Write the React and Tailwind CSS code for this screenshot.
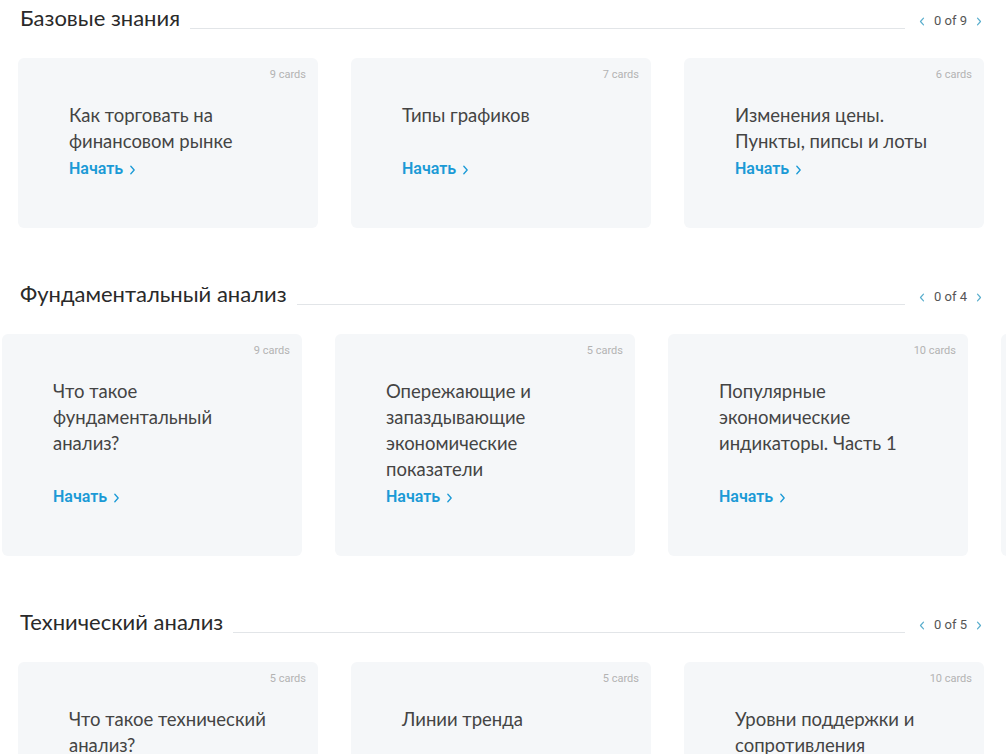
import React from "react";

const sections = [
  {
    title: "Базовые знания",
    pager: "0 of 9",
    offset: "ml-[18px]",
    titleHeight: "min-h-[52px]",
    peek: false,
    cards: [
      { count: "9 cards", text: "Как торговать на финансовом рынке" },
      { count: "7 cards", text: "Типы графиков" },
      { count: "6 cards", text: "Изменения цены. Пункты, пипсы и лоты" },
    ],
  },
  {
    title: "Фундаментальный анализ",
    pager: "0 of 4",
    offset: "ml-[2px]",
    titleHeight: "min-h-[104px]",
    peek: true,
    cards: [
      { count: "9 cards", text: "Что такое фундаментальный анализ?" },
      { count: "5 cards", text: "Опережающие и запаздывающие экономические показатели" },
      { count: "10 cards", text: "Популярные экономические индикаторы. Часть 1" },
    ],
  },
  {
    title: "Технический анализ",
    pager: "0 of 5",
    offset: "ml-[18px]",
    titleHeight: "min-h-[52px]",
    peek: false,
    cards: [
      { count: "5 cards", text: "Что такое технический анализ?" },
      { count: "5 cards", text: "Линии тренда" },
      { count: "10 cards", text: "Уровни поддержки и сопротивления" },
    ],
  },
];

const Chevron = ({ dir = "right", className = "" }) => (
  <svg
    viewBox="0 0 8 12"
    className={className}
    fill="none"
    stroke="currentColor"
    strokeWidth="1.6"
    strokeLinecap="round"
    strokeLinejoin="round"
  >
    {dir === "right" ? <path d="M2 1.5 L6 6 L2 10.5" /> : <path d="M6 1.5 L2 6 L6 10.5" />}
  </svg>
);

const Card = ({ card, titleHeight }) => (
  <div className="w-[300px] shrink-0 bg-[#f5f7f9] rounded-[6px] pt-[10px] pb-[49px]">
    <div className="flex justify-end pr-[12px] text-[11px] leading-[14px] text-[#b3b3b3] font-['Roboto',sans-serif]">
      {card.count}
    </div>
    <div className="pl-[51px] pr-[36px] mt-[20px]">
      <div
        className={`${titleHeight} text-[18.5px] leading-[26px] text-[#444] font-['Lato','Noto_Sans',sans-serif]`}
      >
        {card.text}
      </div>
      <a className="mt-[5px] flex items-center gap-[6px] text-[16px] leading-[20px] font-semibold text-[#1b9ad6] font-['Roboto',sans-serif]">
        Начать
        <Chevron className="w-[7px] h-[10px] mt-[1px]" />
      </a>
    </div>
  </div>
);

export default function App() {
  return (
    <div className="min-h-screen bg-white pt-[5px] overflow-hidden w-[1006px]">
      {sections.map((s) => (
        <div key={s.title} className="mb-[53px]">
          {/* header */}
          <div className="flex items-end h-[26px] pl-[20px] pr-[24px]">
            <h2 className="text-[22px] leading-[26px] text-[#2a2a2a] font-['Lato','Noto_Sans',sans-serif] whitespace-nowrap">
              {s.title}
            </h2>
            <div className="flex-1 h-px bg-[#e2e5e8] ml-[10px] mr-[14px] mb-[2px]" />
            <div className="flex items-center gap-[9px] mb-[2px] text-[13px] leading-[16px] text-[#555] font-['Roboto',sans-serif]">
              <Chevron dir="left" className="w-[6px] h-[9px] text-[#5aaecd]" />
              <span>{s.pager}</span>
              <Chevron className="w-[6px] h-[9px] text-[#5aaecd]" />
            </div>
          </div>

          {/* cards */}
          <div className={`flex gap-[33px] mt-[27px] ${s.offset}`}>
            {s.cards.map((c) => (
              <Card key={c.text} card={c} titleHeight={s.titleHeight} />
            ))}
            {s.peek && (
              <div className="w-[300px] shrink-0 bg-[#f5f7f9] rounded-[6px]" />
            )}
          </div>
        </div>
      ))}
    </div>
  );
}
